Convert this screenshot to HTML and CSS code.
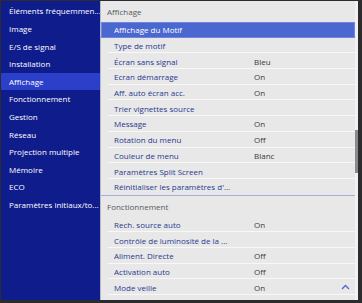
FILE: index.html
```html
<!DOCTYPE html>
<html lang="fr">
<head>
<meta charset="utf-8">
<link rel="stylesheet" href="styles.css">
</head>
<body>
<div class="frame">
  <nav class="sidebar">
    <div class="nav-item">Éléments fréquemmen...</div>
    <div class="nav-item">Image</div>
    <div class="nav-item">E/S de signal</div>
    <div class="nav-item">Installation</div>
    <div class="nav-item active">Affichage</div>
    <div class="nav-item">Fonctionnement</div>
    <div class="nav-item">Gestion</div>
    <div class="nav-item">Réseau</div>
    <div class="nav-item">Projection multiple</div>
    <div class="nav-item">Mémoire</div>
    <div class="nav-item">ECO</div>
    <div class="nav-item">Paramètres initiaux/to...</div>
  </nav>
  <div class="divider"></div>
  <main class="panel">
    <div class="list">
      <div class="section">Affichage</div>
      <div class="row selected"><span class="label">Affichage du Motif</span><span class="value"></span></div>
      <div class="row"><span class="label">Type de motif</span><span class="value"></span></div>
      <div class="row"><span class="label">Écran sans signal</span><span class="value">Bleu</span></div>
      <div class="row"><span class="label">Ecran démarrage</span><span class="value">On</span></div>
      <div class="row"><span class="label">Aff. auto écran acc.</span><span class="value">On</span></div>
      <div class="row"><span class="label">Trier vignettes source</span><span class="value"></span></div>
      <div class="row"><span class="label">Message</span><span class="value">On</span></div>
      <div class="row"><span class="label">Rotation du menu</span><span class="value">Off</span></div>
      <div class="row"><span class="label">Couleur de menu</span><span class="value">Blanc</span></div>
      <div class="row"><span class="label">Paramètres Split Screen</span><span class="value"></span></div>
      <div class="row last"><span class="label">Réinitialiser les paramètres d'...</span><span class="value"></span></div>
      <div class="section second">Fonctionnement</div>
      <div class="row"><span class="label">Rech. source auto</span><span class="value">On</span></div>
      <div class="row"><span class="label">Contrôle de luminosité de la ...</span><span class="value"></span></div>
      <div class="row"><span class="label">Aliment. Directe</span><span class="value">Off</span></div>
      <div class="row"><span class="label">Activation auto</span><span class="value">Off</span></div>
      <div class="row"><span class="label">Mode veille</span><span class="value">On</span>
        <svg class="chev" width="9" height="6" viewBox="0 0 9 6"><polyline points="1,5 4.5,1.5 8,5" fill="none" stroke="#5464c4" stroke-width="1.3"/></svg>
      </div>
      <div class="row"><span class="label">Temps Mode veille</span><span class="value">10</span></div>
    </div>
    <div class="track"><div class="thumb"></div></div>
  </main>
</div>
</body>
</html>
```
FILE: styles.css
```css
html, body {
  margin: 0;
  padding: 0;
}
body {
  width: 362px;
  height: 303px;
  overflow: hidden;
  background: #2c2c2e;
  font-family: "Open Sans", "Noto Sans", sans-serif;
  font-size: 8px;
}
.frame {
  display: flex;
  margin: 1px 4px 0 1px;
  height: 299px;
  overflow: hidden;
}
.sidebar {
  width: 99px;
  flex: none;
  background: #0f1c8c;
  padding-top: 1.4px;
  box-sizing: border-box;
}
.nav-item {
  height: 17.6px;
  line-height: 17.6px;
  padding-left: 8px;
  color: #ffffff;
  white-space: nowrap;
  overflow: hidden;
}
.nav-item.active {
  background: #2b3fc8;
}
.divider {
  width: 1px;
  flex: none;
  background: #b5b9cc;
}
.panel {
  flex: 1;
  display: flex;
  background: #e8e8e8;
  overflow: hidden;
}
.list {
  flex: 1;
  overflow: hidden;
}
.section {
  height: 21px;
  line-height: 21px;
  padding-left: 6px;
  color: #555a60;
}
.section.second {
  border-top: 1px solid #a7afd9;
}
.row {
  height: 15.7px;
  display: grid;
  grid-template-columns: 140px 1fr auto;
  align-items: center;
  padding-left: 13px;
  padding-right: 5px;
  box-sizing: border-box;
  background: linear-gradient(#f8f8f8, #f8f8f8) no-repeat 7px 100% / calc(100% - 7px) 1px;
  white-space: nowrap;
}
.row.last {
  background: none;
}
.row.selected {
  background: #4b68d0;
  box-shadow: inset 0 0 0 1px #6f86dc;
}
.label {
  color: #27388f;
  overflow: hidden;
}
.row.selected .label {
  color: #ffffff;
}
.value {
  color: #3a3a3a;
}
.chev {
  display: block;
}
.track {
  width: 3px;
  flex: none;
  background: #f1f1f1;
  padding-top: 129px;
  box-sizing: border-box;
}
.thumb {
  height: 43px;
  background: #8a8a8e;
}
```
